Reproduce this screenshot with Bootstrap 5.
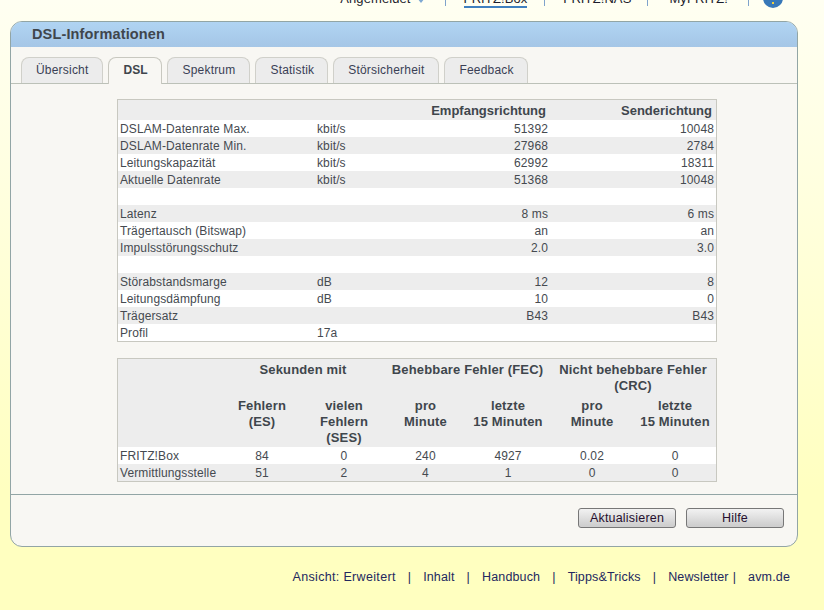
<!DOCTYPE html>
<html lang="de"><head><meta charset="utf-8"><title>DSL-Informationen</title>
<link rel="stylesheet" href="https://cdn.jsdelivr.net/npm/bootstrap@5.3.0/dist/css/bootstrap.min.css">
<style>
html,body{height:610px;overflow:hidden}
body{font-family:"Liberation Sans",Arial,sans-serif;font-size:12px;color:#3f464c;background:linear-gradient(#fffff2 0,#ffffc0 490px);}
.topbar{height:21px;overflow:hidden;padding:0 41px 13px 0;font-size:13px;line-height:14px;letter-spacing:.1px;color:#222}
.topbar .tsep{width:1px;height:12px;background:#7fa3cc;margin-bottom:2px;flex:none}
.tlink{border-bottom:2px solid transparent;color:#1c1c2c;flex:none}
.tlink.on{border-bottom-color:#3f7fbf;}
.arrow-t{margin:0 0 4px 6px}
.sep-a{margin-left:20px}
.lnk-a{margin-left:18px}
.sep-b{margin-left:17px}
.sep-c{margin-left:16px}
.lnk-c{margin-left:21px}
.globe-i{margin-left:14px;flex:none}
.panel-main{margin:0 26px 0 10px;height:526px;border:1px solid #92a5a5;border-radius:12px;background:#f8f7f3;overflow:hidden}
.panel-head{height:25px;background:linear-gradient(#b0d4f3,#a5c6e6);font-size:14.5px;font-weight:700;line-height:25px;padding-left:21px;color:#3f464c;letter-spacing:.15px}
.nav-tabs.ftabs{padding:10px 0 0 10px;gap:5px;height:37px;border-bottom:1px solid #bcc1b8;--bs-nav-tabs-border-width:0}
.ftabs .nav-link{height:26px;margin:0;padding:0 14px;line-height:24px;font-size:12px;letter-spacing:.2px;color:#3a3f55;background:#ececec;border:1px solid #d0d0ca;border-bottom:0;border-radius:8px 8px 0 0}
.ftabs .nav-link.active{background:#f8f7f3;color:#3f464c;font-weight:700;height:27px;position:relative;border-color:#c8c8c0;letter-spacing:0}
.ftabs .nav-link.tab-tight{padding-right:13px}
.panel-body{height:411px;padding-top:15px;border-bottom:1px solid #92a5a5}
.dtable{width:600px;margin:0 0 16px 106px;border:1px solid #c8c8c0;background:#fff;border-collapse:separate;border-spacing:0;table-layout:fixed;line-height:16px;letter-spacing:.12px;color:#454a50}
.dtable td{padding:1px 2px 0;height:17px;white-space:nowrap}
.dtable th{padding:0 2px;white-space:nowrap}
.dtable tr.g>*{background:#ededed}
.dtable th{background:#ededed;font-size:13px;font-weight:700;color:#3f464c;letter-spacing:0}
.t1 thead th{height:20px;padding:2px 4px 0 2px;vertical-align:top;line-height:17px}
.t2 th{white-space:normal;text-align:center;line-height:16px;vertical-align:top;padding:3px 2px 0;letter-spacing:.15px}
.t2 tr.h2 th{padding:4px 2px 1px}
.panel-foot{height:50px;gap:10px;padding:13px 13px 0 0}
.fbtn{width:98px;height:20px;padding:0;font-size:12.5px;line-height:17px;color:#26102f;border:1px solid #777;border-radius:3px;background:linear-gradient(#f2f2f2,#cfcfcf 90%);letter-spacing:.2px}
.foot-links{margin:22px 34px 0 0;font-size:12.5px;line-height:16px;color:#23285f;letter-spacing:.15px;gap:12px}
.foot-first{letter-spacing:.33px}
.foot-pipe{margin-left:-8px}
</style></head>
<body>
<div class="topbar d-flex justify-content-end align-items-end">
  <span class="tlink">Angemeldet</span>
  <svg width="8" height="6" viewBox="0 0 8 6" class="arrow-t"><path d="M0 0h8L4 5z" fill="#7fa9d3"/></svg>
  <span class="tsep sep-a"></span>
  <span class="tlink on lnk-a">FRITZ!Box</span>
  <span class="tsep sep-b"></span>
  <span class="tlink lnk-a">FRITZ!NAS</span>
  <span class="tsep sep-c"></span>
  <span class="tlink lnk-c">MyFRITZ!</span>
  <span class="tsep sep-a"></span>
  <svg width="20" height="20" viewBox="0 0 20 20" class="globe-i"><circle cx="10" cy="10" r="10" fill="#3878b8"/><rect x="9" y="14" width="2" height="2" fill="#f0d040"/></svg>
</div>
<div class="panel-main">
  <div class="panel-head">DSL-Informationen</div>
  <ul class="nav nav-tabs ftabs">
    <li class="nav-item"><a class="nav-link">Übersicht</a></li>
    <li class="nav-item"><a class="nav-link active">DSL</a></li>
    <li class="nav-item"><a class="nav-link">Spektrum</a></li>
    <li class="nav-item"><a class="nav-link tab-tight">Statistik</a></li>
    <li class="nav-item"><a class="nav-link">Störsicherheit</a></li>
    <li class="nav-item"><a class="nav-link tab-tight">Feedback</a></li>
  </ul>
  <div class="panel-body">
    <table class="dtable t1">
      <colgroup><col style="width:197px"><col style="width:99px"><col style="width:136px"><col style="width:166px"></colgroup>
      <thead><tr><th></th><th></th><th class="text-end">Empfangsrichtung</th><th class="text-end">Senderichtung</th></tr></thead>
      <tbody>
      <tr><td>DSLAM-Datenrate Max.</td><td>kbit/s</td><td class="text-end">51392</td><td class="text-end">10048</td></tr>
      <tr class="g"><td>DSLAM-Datenrate Min.</td><td>kbit/s</td><td class="text-end">27968</td><td class="text-end">2784</td></tr>
      <tr><td>Leitungskapazität</td><td>kbit/s</td><td class="text-end">62992</td><td class="text-end">18311</td></tr>
      <tr class="g"><td>Aktuelle Datenrate</td><td>kbit/s</td><td class="text-end">51368</td><td class="text-end">10048</td></tr>
      <tr><td colspan="4"></td></tr>
      <tr class="g"><td>Latenz</td><td></td><td class="text-end">8 ms</td><td class="text-end">6 ms</td></tr>
      <tr><td>Trägertausch (Bitswap)</td><td></td><td class="text-end">an</td><td class="text-end">an</td></tr>
      <tr class="g"><td>Impulsstörungsschutz</td><td></td><td class="text-end">2.0</td><td class="text-end">3.0</td></tr>
      <tr><td colspan="4"></td></tr>
      <tr class="g"><td>Störabstandsmarge</td><td>dB</td><td class="text-end">12</td><td class="text-end">8</td></tr>
      <tr><td>Leitungsdämpfung</td><td>dB</td><td class="text-end">10</td><td class="text-end">0</td></tr>
      <tr class="g"><td>Trägersatz</td><td></td><td class="text-end">B43</td><td class="text-end">B43</td></tr>
      <tr><td>Profil</td><td>17a</td><td></td><td></td></tr>
      </tbody>
    </table>
    <table class="dtable t2 mb-0">
      <colgroup><col style="width:103px"><col style="width:82px"><col style="width:82px"><col style="width:81px"><col style="width:84px"><col style="width:84px"><col style="width:82px"></colgroup>
      <thead>
      <tr><th></th><th colspan="2">Sekunden mit</th><th colspan="2">Behebbare Fehler (FEC)</th><th colspan="2">Nicht behebbare Fehler (CRC)</th></tr>
      <tr class="h2"><th></th><th>Fehlern<br>(ES)</th><th>vielen<br>Fehlern<br>(SES)</th><th>pro<br>Minute</th><th>letzte<br>15 Minuten</th><th>pro<br>Minute</th><th>letzte<br>15 Minuten</th></tr>
      </thead>
      <tbody class="text-center">
      <tr><td class="text-start">FRITZ!Box</td><td>84</td><td>0</td><td>240</td><td>4927</td><td>0.02</td><td>0</td></tr>
      <tr class="g"><td class="text-start">Vermittlungsstelle</td><td>51</td><td>2</td><td>4</td><td>1</td><td>0</td><td>0</td></tr>
      </tbody>
    </table>
  </div>
  <div class="panel-foot d-flex justify-content-end">
    <button type="button" class="btn fbtn">Aktualisieren</button>
    <button type="button" class="btn fbtn">Hilfe</button>
  </div>
</div>
<div class="foot-links d-flex justify-content-end">
  <span class="foot-first">Ansicht: Erweitert</span><span>|</span><span>Inhalt</span><span>|</span><span>Handbuch</span><span>|</span><span>Tipps&amp;Tricks</span><span>|</span><span>Newsletter</span><span class="foot-pipe">|</span><span>avm.de</span>
</div>
</body></html>
